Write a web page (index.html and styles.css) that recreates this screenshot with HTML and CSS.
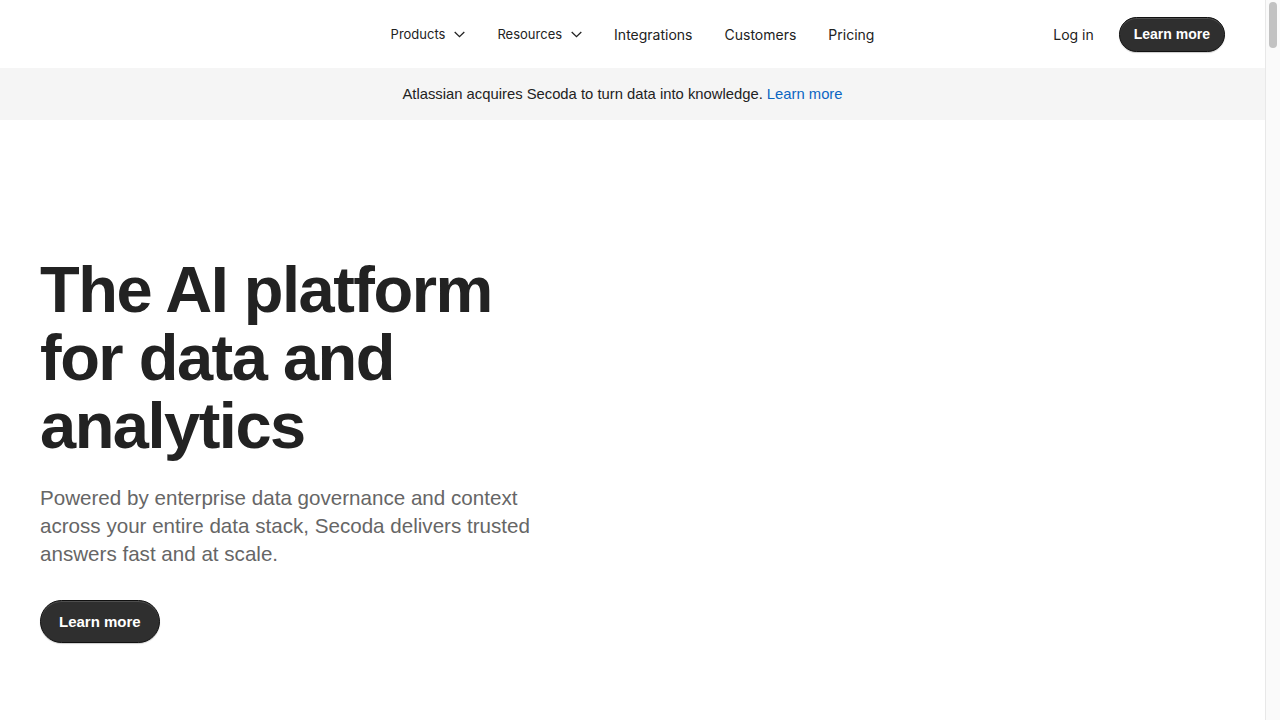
FILE: index.html
```html
<!DOCTYPE html>
<html lang="en">
<head>
<meta charset="UTF-8">
<meta name="viewport" content="width=device-width, initial-scale=1.0">
<title>Secoda - The AI platform for data and analytics</title>
<link rel="stylesheet" href="styles.css">
</head>
<body>
<header class="nav">
    <a class="logo" href="#" aria-label="Secoda"></a>
    <nav class="nav-links">
        <a href="#" class="nav-drop">Products
            <svg width="11" height="7" viewBox="0 0 11 7"><path d="M0.7 1l4.8 4.7 4.8-4.7" fill="none" stroke="#222" stroke-width="1.3"/></svg>
        </a>
        <a href="#" class="nav-drop">Resources
            <svg width="11" height="7" viewBox="0 0 11 7"><path d="M0.7 1l4.8 4.7 4.8-4.7" fill="none" stroke="#222" stroke-width="1.3"/></svg>
        </a>
        <a href="#">Integrations</a>
        <a href="#">Customers</a>
        <a href="#">Pricing</a>
    </nav>
    <div class="nav-right">
        <a href="#" class="login">Log in</a>
        <a href="#" class="btn btn-small">Learn more</a>
    </div>
</header>

<div class="banner">
    Atlassian acquires Secoda to turn data into knowledge. <a href="#">Learn more</a>
</div>

<main class="page">
    <section class="hero">
        <h1>The AI platform for data and analytics</h1>
        <p>Powered by enterprise data governance and context across your entire data stack, Secoda delivers trusted answers fast and at scale.</p>
        <a href="#" class="btn">Learn more</a>
    </section>
</main>

<div class="scrollbar"><div class="scrollbar-thumb"></div></div>
</body>
</html>
```

FILE: styles.css
```css
/* Secoda landing */
body {
    margin: 0 15px 0 0;
    font-family: "Liberation Sans", Arial, sans-serif;
    color: #222;
    background: #fff;
}
a {
    text-decoration: none;
    color: inherit;
}
/* window scrollbar */
.scrollbar {
    position: fixed;
    top: 0;
    right: 0;
    bottom: 0;
    width: 14px;
    background: #fafafa;
    border-left: 1px solid #e8e8e8;
}
.scrollbar-thumb {
    margin: 2px 0 0 3px;
    width: 8px;
    height: 46px;
    background: #c2c2c2;
    border-radius: 4px;
}
.nav {
    display: grid;
    grid-template-columns: 1fr auto 1fr;
    align-items: center;
    height: 68px;
    padding: 0 40px;
}
.nav-links {
    display: flex;
    gap: 32px;
    font-family: Inter, "Liberation Sans", sans-serif;
    font-size: 14px;
    color: #222;
}
.nav-drop {
    display: flex;
    align-items: center;
    gap: 9px;
    font-size: 13px;
}
.nav-right {
    display: flex;
    justify-content: flex-end;
    align-items: center;
    gap: 25px;
}
.login {
    font-family: Inter, "Liberation Sans", sans-serif;
    font-size: 14px;
}
.btn {
    display: inline-block;
    background: #2f2f2f;
    color: #fff;
    font-family: "Liberation Sans", Arial, sans-serif;
    font-weight: bold;
    font-size: 15px;
    line-height: 17px;
    padding: 12px 18px;
    border: 1px solid #111;
    border-radius: 999px;
    box-shadow: inset 0 1px 0 rgba(255, 255, 255, 0.15), 0 1px 1px rgba(0, 0, 0, 0.2);
}
.btn-small {
    font-size: 14px;
    padding: 8px 14px;
}
.banner {
    background: #f5f5f5;
    height: 52px;
    line-height: 52px;
    text-align: center;
    font-size: 14.8px;
    color: #222;
    padding-right: 20px;
}
.banner a {
    color: #0b66c3;
}
.page {
    min-height: 10600px;
}
.hero {
    padding: 136px 40px 0;
    max-width: 500px;
}
.hero h1 {
    margin: 0;
    font-size: 65px;
    line-height: 68px;
    letter-spacing: -1.5px;
    font-weight: bold;
    color: #222;
}
.hero p {
    margin: 24px 0 32px;
    font-size: 20.6px;
    line-height: 28px;
    color: #666;
}
```
